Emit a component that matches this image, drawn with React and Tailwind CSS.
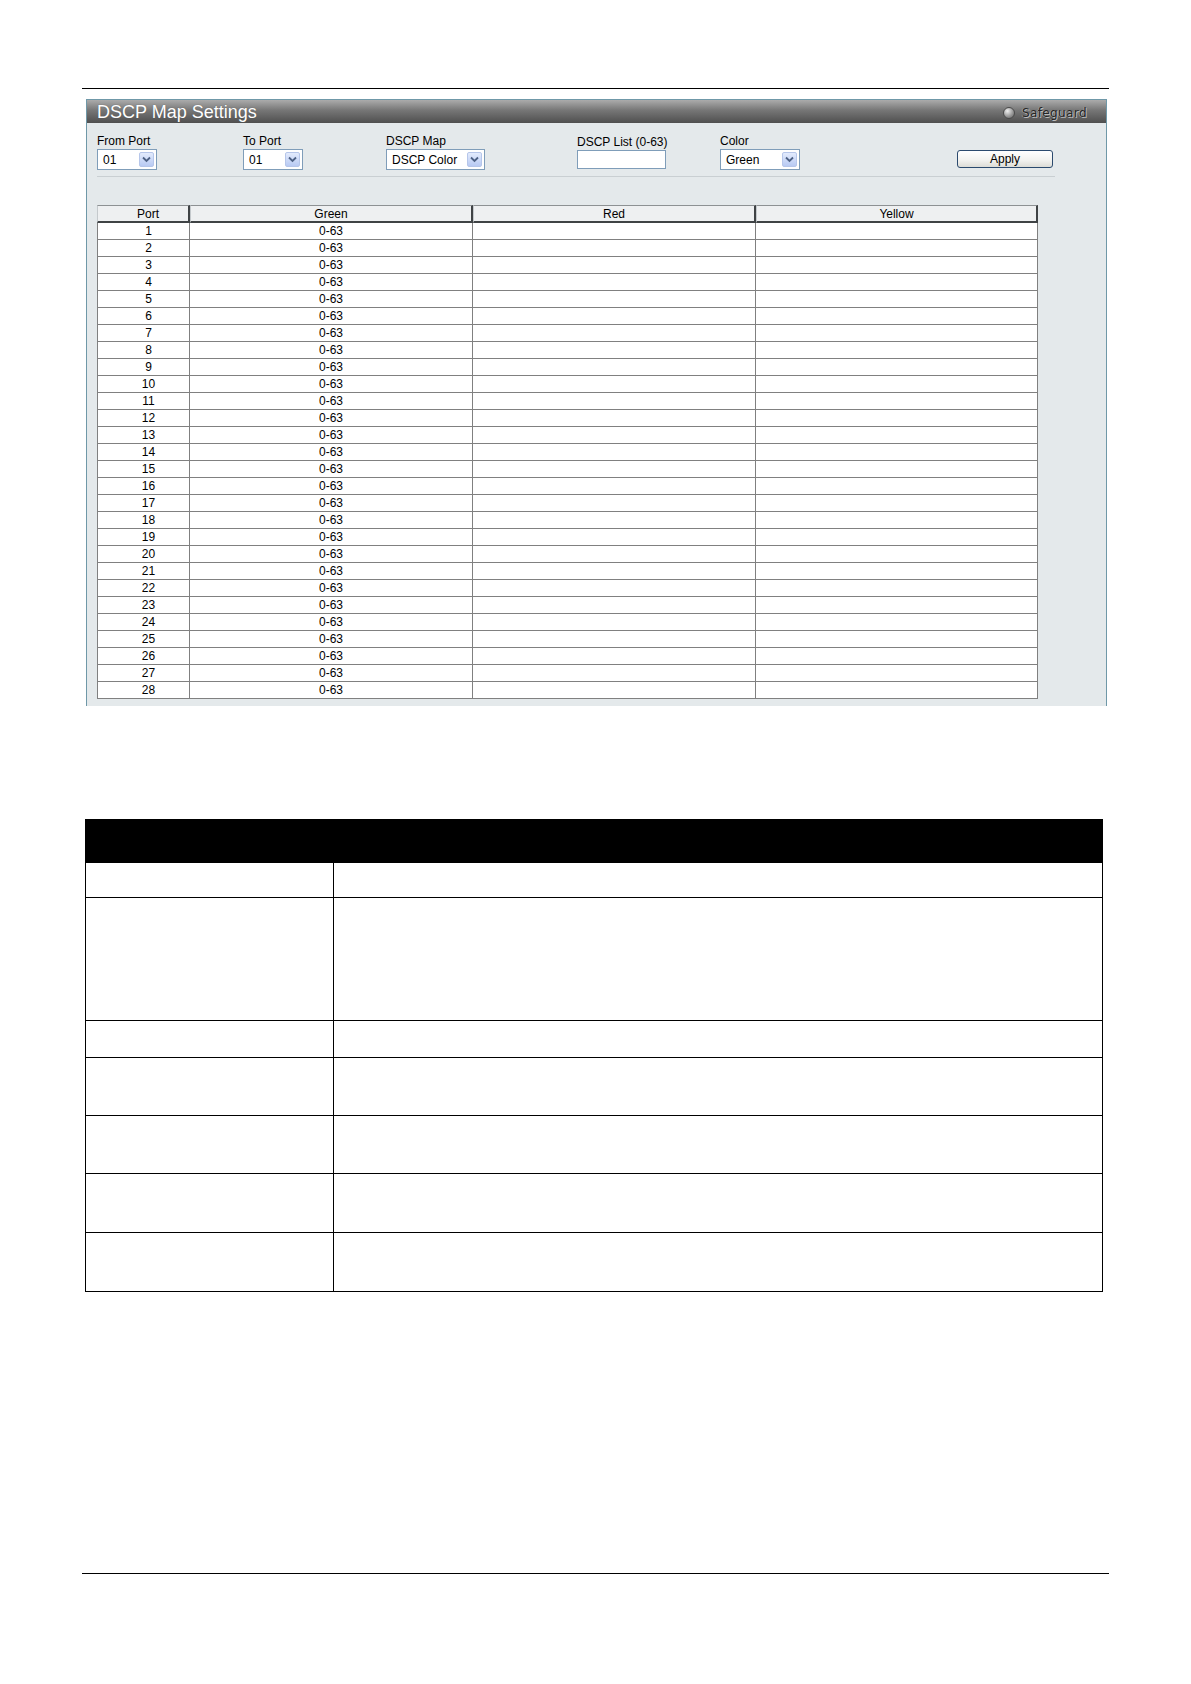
import React from 'react';

const ports = Array.from({ length: 28 }, (_, i) => i + 1);

const Arrow = () => (
  <div className="w-[15px] h-[15px] mr-[2px] rounded-[2px] border border-[#b6c6ea] bg-[linear-gradient(to_bottom,#e3ebfd,#b8caf3)] flex items-center justify-center">
    <svg width="9" height="7" viewBox="0 0 9 7">
      <path d="M1 1.5 L4.5 5 L8 1.5" fill="none" stroke="#4d6185" strokeWidth="1.8" />
    </svg>
  </div>
);

const Select = ({ value, width }) => (
  <div className={`${width} h-[21px] bg-white border border-[#7f9db9] flex items-center justify-between`}>
    <span className="pl-[5px] text-[12px] text-black">{value}</span>
    <Arrow />
  </div>
);

const Field = ({ label, children, width }) => (
  <div className={`${width} flex flex-col gap-[1px]`}>
    <span className="text-[12px] leading-[14px] text-black">{label}</span>
    {children}
  </div>
);

const descRows = ['h-[35px]', 'h-[123px]', 'h-[37px]', 'h-[58px]', 'h-[58px]', 'h-[59px]', 'h-[59px]'];

export default function App() {
  return (
    <div className="w-[1191px] h-[1684px] bg-white relative font-['Liberation_Sans',Arial,sans-serif]">
      <div className="pt-[88px]">
        <div className="ml-[82px] w-[1027px] h-px bg-black" />

        {/* --- DSCP MAP PANEL --- */}
        <div className="mt-[10px] ml-[86px] w-[1021px] h-[607px] bg-[#e4e9eb] border-t border-l border-r border-[#6f98a8]">
          <div className="h-[23px] bg-[linear-gradient(to_bottom,#ababab,#767676_45%,#4f4f4f)] flex items-center justify-between pl-[10px] pr-[19px]">
            <span className="text-[18px] text-white leading-none [text-shadow:0_0_1px_#555]">DSCP Map Settings</span>
            <div className="flex items-center gap-[7px] pt-[3px]">
              <div className="w-[12px] h-[12px] rounded-full bg-[radial-gradient(circle_at_35%_30%,#f0f0f0,#9a9a9a_55%,#5e5e5e)] border border-[#4a4a4a]" />
              <span className="font-['DejaVu_Sans',Verdana,sans-serif] text-[12px] leading-none tracking-[0.4px] text-[#262626] [text-shadow:1px_1px_0_#bdbdbd,-1px_0_0_#9a9a9a]">Safeguard</span>
            </div>
          </div>

          <div className="pl-[10px] pt-[11px] flex items-end">
            <Field label="From Port" width="w-[146px]">
              <Select value="01" width="w-[60px]" />
            </Field>
            <Field label="To Port" width="w-[143px]">
              <Select value="01" width="w-[60px]" />
            </Field>
            <Field label="DSCP Map" width="w-[191px]">
              <Select value="DSCP Color" width="w-[99px]" />
            </Field>
            <Field label="DSCP List (0-63)" width="w-[143px]">
              <div className="w-[89px] h-[19px] mb-[1px] bg-white border border-[#7f9db9]" />
            </Field>
            <Field label="Color" width="w-[237px]">
              <Select value="Green" width="w-[80px]" />
            </Field>
            <button className="w-[96px] h-[18px] mb-[2px] rounded-[3px] border border-[#2b4a6e] bg-[linear-gradient(to_bottom,#ffffff,#f1f1ee_60%,#dcdcd6)] text-[12px] leading-none text-black">
              Apply
            </button>
          </div>

          <div className="ml-[10px] mt-[6px] w-[958px] h-px bg-[#c9cfd2]" />

          {/* --- PORT TABLE --- */}
          <div className="ml-[10px] mt-[28px] w-[941px] text-[12px] text-black">
            <div className="flex h-[18px]">
              {[['Port', 'w-[93px] pl-[10px]'], ['Green', 'w-[283px]'], ['Red', 'w-[283px]'], ['Yellow', 'w-[282px]']].map(([h, w]) => (
                <div key={h} className={`${w} bg-[#eef0f1] border-t border-l border-t-[#8d9193] border-l-[#c4c9cc] border-r-2 border-b-2 border-r-[#3f4345] border-b-[#3f4345] flex items-center justify-center leading-none`}>
                  {h}
                </div>
              ))}
            </div>
            {ports.map((p) => (
              <div key={p} className="flex h-[17px] bg-white">
                <div className="w-[93px] pl-[10px] border-l border-r border-b border-[#808080] flex items-center justify-center leading-none">{p}</div>
                <div className="w-[283px] border-r border-b border-[#808080] flex items-center justify-center leading-none">0-63</div>
                <div className="w-[283px] border-r border-b border-[#808080]" />
                <div className="w-[282px] border-r border-b border-[#808080]" />
              </div>
            ))}
          </div>
        </div>

        {/* --- DESCRIPTION TABLE --- */}
        <div className="mt-[113px] ml-[85px] w-[1018px] border border-black">
          <div className="h-[42px] bg-black" />
          {descRows.map((h, i) => (
            <div key={i} className={`flex border-t border-black ${h}`}>
              <div className="w-[248px] border-r border-black" />
              <div className="flex-1" />
            </div>
          ))}
        </div>

        <div className="mt-[281px] ml-[82px] w-[1027px] h-px bg-black" />
      </div>
    </div>
  );
}
